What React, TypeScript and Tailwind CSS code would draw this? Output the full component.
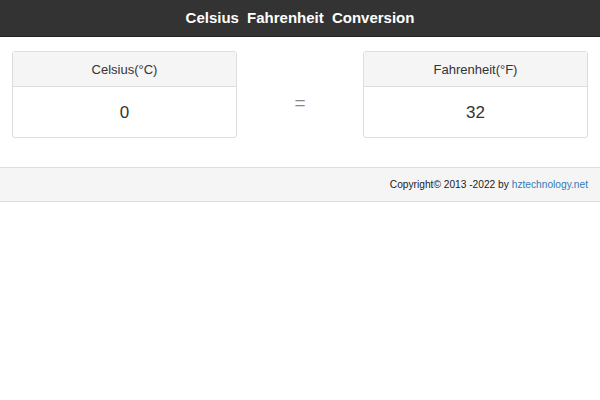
const Panel = ({ label, value }: { label: string; value: string }) => (
    <div className="w-[225px] rounded-[3px] border border-[#dddddd] bg-white">
        <div className="flex h-[35px] items-center justify-center border-b border-[#dddddd] bg-[#f5f5f5] pt-[2px] text-[13px] text-[#333333]">
            {label}
        </div>
        <div className="flex h-[50px] items-center justify-center pt-[2px] text-[17px] text-[#333333]">
            {value}
        </div>
    </div>
);

export default function App() {
    return (
        <div className="min-h-[400px] bg-white font-['Liberation_Sans',Arial,sans-serif]">
            <div className="flex h-[37px] items-center justify-center border-b border-[#222222] bg-[#333333] text-[15px] font-bold text-white [word-spacing:4px]">
                Celsius Fahrenheit Conversion
            </div>
            <div className="flex items-center justify-between px-[12px] pt-[14px] pb-[29px]">
                <Panel label="Celsius(°C)" value="0" />
                <div className="pt-[18px] text-[19px] text-[#888888]">=</div>
                <Panel label="Fahrenheit(°F)" value="32" />
            </div>
            <div className="flex h-[35px] items-center justify-end border-y border-[#dddddd] bg-[#f5f5f5] px-[12px] text-[10.2px] text-[#222222]">
                <span>
                    Copyright© 2013 -2022 by <a className="text-[#337ab7]">hztechnology.net</a>
                </span>
            </div>
        </div>
    );
}
